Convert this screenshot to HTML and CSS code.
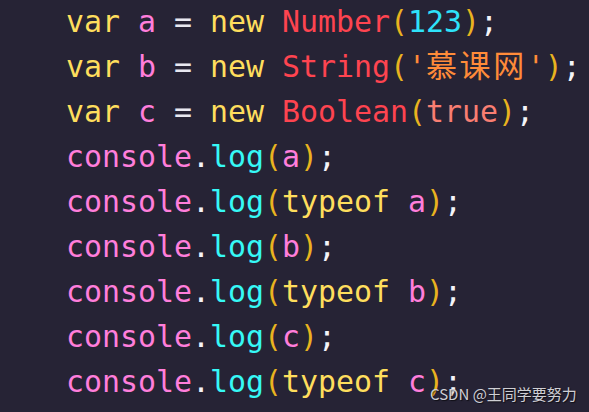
FILE: index.html
```html
<!DOCTYPE html>
<html lang="zh-CN">
<head>
<meta charset="utf-8">
<title>code</title>
<link rel="stylesheet" href="styles.css">
</head>
<body>
<main class="editor">
<pre class="code"><span class="kw">var</span> <span class="v">a</span> <span class="op">=</span> <span class="kw">new</span> <span class="cls">Number</span><span class="br">(</span><span class="num">123</span><span class="br">)</span><span class="pn">;</span>
<span class="kw">var</span> <span class="v">b</span> <span class="op">=</span> <span class="kw">new</span> <span class="cls">String</span><span class="br">(</span><span class="str">'<span class="cjk">慕课网</span>'</span><span class="br">)</span><span class="pn">;</span>
<span class="kw">var</span> <span class="v">c</span> <span class="op">=</span> <span class="kw">new</span> <span class="cls">Boolean</span><span class="br">(</span><span class="bool">true</span><span class="br">)</span><span class="pn">;</span>
<span class="v">console</span><span class="pn">.</span><span class="fn">log</span><span class="br">(</span><span class="v">a</span><span class="br">)</span><span class="pn">;</span>
<span class="v">console</span><span class="pn">.</span><span class="fn">log</span><span class="br">(</span><span class="kw">typeof</span> <span class="v">a</span><span class="br">)</span><span class="pn">;</span>
<span class="v">console</span><span class="pn">.</span><span class="fn">log</span><span class="br">(</span><span class="v">b</span><span class="br">)</span><span class="pn">;</span>
<span class="v">console</span><span class="pn">.</span><span class="fn">log</span><span class="br">(</span><span class="kw">typeof</span> <span class="v">b</span><span class="br">)</span><span class="pn">;</span>
<span class="v">console</span><span class="pn">.</span><span class="fn">log</span><span class="br">(</span><span class="v">c</span><span class="br">)</span><span class="pn">;</span>
<span class="v">console</span><span class="pn">.</span><span class="fn">log</span><span class="br">(</span><span class="kw">typeof</span> <span class="v">c</span><span class="br">)</span><span class="pn">;</span></pre>
<div class="watermark">CSDN @王同学要努力</div>
</main>
</body>
</html>
```

FILE: styles.css
```css
html, body {
  margin: 0;
  padding: 0;
  background: #262335;
}
.editor {
  position: relative;
  width: 589px;
  height: 412px;
  overflow: hidden;
  background: #262335;
}
.code {
  margin: 0;
  padding: 0 0 0 66px;
  font-family: "DejaVu Sans Mono", "Liberation Mono", "Noto Sans CJK SC", monospace;
  font-size: 29.9px;
  line-height: 45px;
  color: #ffffff;
  white-space: pre;
  position: relative;
  top: -1px;
}
.kw { color: #fede5d; }
.v { color: #ff7edb; }
.op { color: #e8e8f0; }
.cls { color: #fe4450; }
.num { color: #2ee2fa; }
.br { color: #e9b31f; }
.pn { color: #f4f4f8; }
.str { color: #ff8b39; }
.bool { color: #f97e72; }
.fn { color: #36f9f6; }
.cjk {
  font-family: "Noto Sans CJK SC", sans-serif;
  font-size: 31px;
  line-height: 0;
  letter-spacing: 2.6px;
}
.watermark {
  position: absolute;
  left: 430px;
  top: 384px;
  font-family: "Noto Sans CJK SC", "Noto Sans", sans-serif;
  font-size: 15px;
  line-height: 20px;
  color: #cfcfd4;
  text-shadow: 1px 1px 1px rgba(0, 0, 0, 0.6);
}
```
